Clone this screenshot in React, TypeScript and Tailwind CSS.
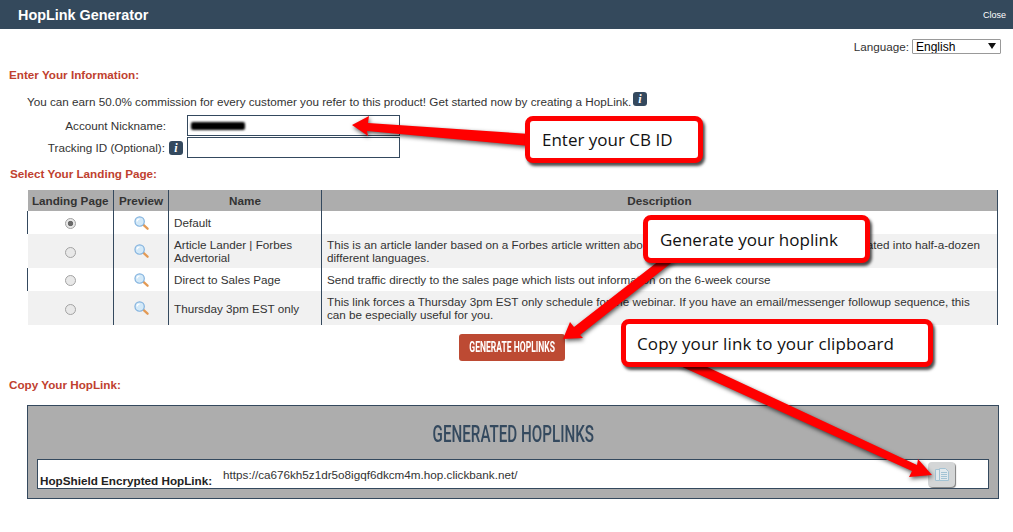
const sans = "font-['Liberation_Sans',Arial,sans-serif]"

function InfoIcon({ className = '' }: { className?: string }) {
  return (
    <span className={`inline-flex h-[14px] w-[14px] items-center justify-center rounded-[3px] bg-[#34495e] font-['Liberation_Serif',serif] text-[12px] font-bold italic leading-none text-white ${className}`}>
      i
    </span>
  )
}

function Magnifier() {
  return (
    <svg width="15" height="14" viewBox="0 0 16 15" className="mx-auto block">
      <path d="M9.5 9l5 4.6" stroke="#e39a55" strokeWidth="2.4" strokeLinecap="round" />
      <circle cx="6" cy="6" r="5" fill="#d3e9f8" stroke="#82b2de" strokeWidth="1.3" />
      <path d="M3.2 6a2.8 2.8 0 0 1 2.8-2.8" fill="none" stroke="#fff" strokeWidth="1.3" />
    </svg>
  )
}

function Heading({ children }: { children: React.ReactNode }) {
  return <h2 className="text-[11.7px] font-bold leading-[14px] text-[#c0412f]">{children}</h2>
}

const rows = [
  {
    name: 'Default',
    desc: '',
    checked: true,
  },
  {
    name: 'Article Lander | Forbes Advertorial',
    desc: 'This is an article lander based on a Forbes article written about the course, which has been further translated into half-a-dozen different languages.',
  },
  {
    name: 'Direct to Sales Page',
    desc: 'Send traffic directly to the sales page which lists out information on the 6-week course',
  },
  {
    name: 'Thursday 3pm EST only',
    desc: 'This link forces a Thursday 3pm EST only schedule for the webinar. If you have an email/messenger followup sequence, this can be especially useful for you.',
  },
]

function Callout({ text, className }: { text: string; className: string }) {
  return (
    <div className={`absolute flex items-center rounded-[8px] border-[5px] border-[#ff0000] bg-white font-['Open_Sans',sans-serif] text-[17px] leading-none text-[#111] shadow-[2px_3px_3px_rgba(0,0,0,0.7)] ${className}`}>
      {text}
    </div>
  )
}

function Arrows() {
  return (
    <svg width="1013" height="532" className="pointer-events-none absolute left-0 top-0 drop-shadow-[1px_2px_2px_rgba(0,0,0,0.65)]">
      <path d="M352 125 L369 116 L368 123 L530 134 L530 146 L367 131 L368 136 Z" fill="#ff0000" />
      <path d="M563 339 L570 322 L574 327 L660 260 L675 260 L580 335 L583 338 Z" fill="#ff0000" />
      <path d="M932 475 L918 459 L917 465 L703 365 L678 365 L912 471 L909 477 Z" fill="#ff0000" />
    </svg>
  )
}

export default function App() {
  return (
    <div className={`relative h-[532px] w-[1013px] overflow-hidden bg-white text-[11.7px] text-[#333] ${sans}`}>
      <header className="flex h-[29px] items-center justify-between bg-[#34495c] pl-[18px] pr-[7px] pt-[3px] text-white">
        <span className="text-[14.4px] font-bold">HopLink Generator</span>
        <span className="text-[9px]">Close</span>
      </header>

      <div className="flex h-[25px] items-end justify-end gap-[3px] pr-[12px]">
        <span className="leading-[15px]">Language:</span>
        <div className="relative h-[15px] w-[89px]">
          <select className="block h-[15px] w-[89px] appearance-none rounded-[1px] border border-[#999] bg-white pb-0 pl-[3px] pt-[1px] text-[12px] leading-[13px] text-black">
            <option>English</option>
          </select>
          <svg width="8" height="6" viewBox="0 0 8 6" className="absolute right-[5px] top-[4px]">
            <path d="M0 0h8L4 6z" fill="#111" />
          </svg>
        </div>
      </div>

      <div className="pl-[9px] pt-[14px]">
        <Heading>Enter Your Information:</Heading>
      </div>

      <p className="relative mt-[13px] h-[14px] pl-[27px] leading-[14px]">
        You can earn 50.0% commission for every customer you refer to this product! Get started now by creating a HopLink.
        <InfoIcon className="absolute left-[633px] top-[-3px]" />
      </p>

      <div className="mt-[6px] grid grid-cols-[183px_213px] gap-x-[4px] gap-y-[1px]">
        <label className="flex h-[21px] items-center justify-end pr-[17px]">Account Nickname:</label>
        <div className="relative h-[21px] border border-[#34495e]">
          <span className="absolute left-[3px] top-[6px] h-[8px] w-[54px] rounded-[2px] bg-black blur-[1px]" />
        </div>
        <label className="flex h-[21px] items-center justify-end gap-[4px]">
          Tracking ID (Optional):
          <InfoIcon />
        </label>
        <div className="h-[21px] border border-[#34495e]" />
      </div>

      <div className="pl-[10px] pt-[9px]">
        <Heading>Select Your Landing Page:</Heading>
      </div>

      <table className="ml-[27px] mt-[9px] w-[971px] table-fixed border-collapse">
        <colgroup>
          <col className="w-[86px]" />
          <col className="w-[55px]" />
          <col className="w-[153px]" />
          <col />
        </colgroup>
        <thead>
          <tr className="h-[21px] bg-[#adadad] font-bold">
            <th className="border-r border-[#34495e] font-bold">Landing Page</th>
            <th className="border-r border-[#34495e] font-bold">Preview</th>
            <th className="border-r border-[#34495e] font-bold">Name</th>
            <th className="border-r border-[#34495e] font-bold">Description</th>
          </tr>
        </thead>
        <tbody>
          {rows.map((row, i) => (
            <tr key={row.name} className={i % 2 === 1 ? 'bg-[#f1f1f1]' : 'bg-white'}>
              <td className={`border-r border-[#34495e] text-center ${i % 2 === 0 ? 'h-[23px] border-l' : 'h-[34px]'}`}>
                <input
                  type="radio"
                  name="landing"
                  disabled
                  defaultChecked={row.checked}
                  className="inline-block h-[11px] w-[11px] appearance-none rounded-full border border-[#a3a3a3] bg-[#e8e8e8] align-middle checked:bg-[radial-gradient(circle,#6a6a6a_36%,#e8e8e8_48%)]"
                />
              </td>
              <td className="border-r border-[#34495e]">
                <Magnifier />
              </td>
              <td className="border-r border-[#34495e] px-[5px] leading-[13px]">{row.name}</td>
              <td className="border-r border-[#34495e] pl-[5px] pr-[10px] leading-[13px]">{row.desc}</td>
            </tr>
          ))}
        </tbody>
      </table>

      <div className="flex justify-center pl-[11px] pt-[9px]">
        <button className="flex h-[27px] w-[106px] items-center justify-center rounded-[3px] bg-[#bd4a33] font-['Roboto',sans-serif] text-[14px] font-bold text-white">
          <span className="inline-block scale-x-[0.61] whitespace-nowrap">GENERATE HOPLINKS</span>
        </button>
      </div>

      <div className="pl-[9px] pt-[17px]">
        <Heading>Copy Your HopLink:</Heading>
      </div>

      <section className="ml-[27px] mt-[13px] h-[94px] w-[972px] border border-[#34495e] bg-[#adadad] px-[9px]">
        <h3 className="pt-[16px] text-center font-['Roboto',sans-serif] text-[23px] font-medium leading-[26px] text-[#34495e]">
          <span className="inline-block scale-x-[0.66] whitespace-nowrap">GENERATED HOPLINKS</span>
        </h3>
        <div className="mt-[11px] flex h-[30px] items-start border border-[#34495e] bg-white pl-[2px] pr-[33px]">
          <span className="mt-[14px] font-bold leading-[14px] text-[#222]">HopShield Encrypted HopLink:</span>
          <span className="ml-[11px] mt-[8px] grow leading-[14px]">https://ca676kh5z1dr5o8igqf6dkcm4m.hop.clickbank.net/</span>
          <button className="mt-[2px] flex h-[25px] w-[27px] items-center justify-center rounded-[4px] bg-[#d4d6d7] shadow-[1px_1px_1px_#7d7d7d]">
            <svg width="16" height="15" viewBox="0 0 16 15" fill="none" stroke="#a3c3d4" strokeWidth="1">
              <path d="M1.5 2.5h4v11h-4z" fill="#e2e9ed" />
              <path d="M5.5 1.5h6l3 3v9h-9z" fill="#e2e9ed" />
              <path d="M7 5.5h6M7 7.5h6M7 9.5h6M7 11.5h6" />
            </svg>
          </button>
        </div>
      </section>

      <Arrows />
      <Callout text="Enter your CB ID" className="left-[525px] top-[116px] h-[47px] w-[178px] pl-[12px]" />
      <Callout text="Generate your hoplink" className="left-[643px] top-[215px] h-[48px] w-[227px] pl-[12px]" />
      <Callout text="Copy your link to your clipboard" className="left-[621px] top-[319px] h-[48px] w-[312px] pl-[11px] tracking-[0.13px]" />
    </div>
  )
}
